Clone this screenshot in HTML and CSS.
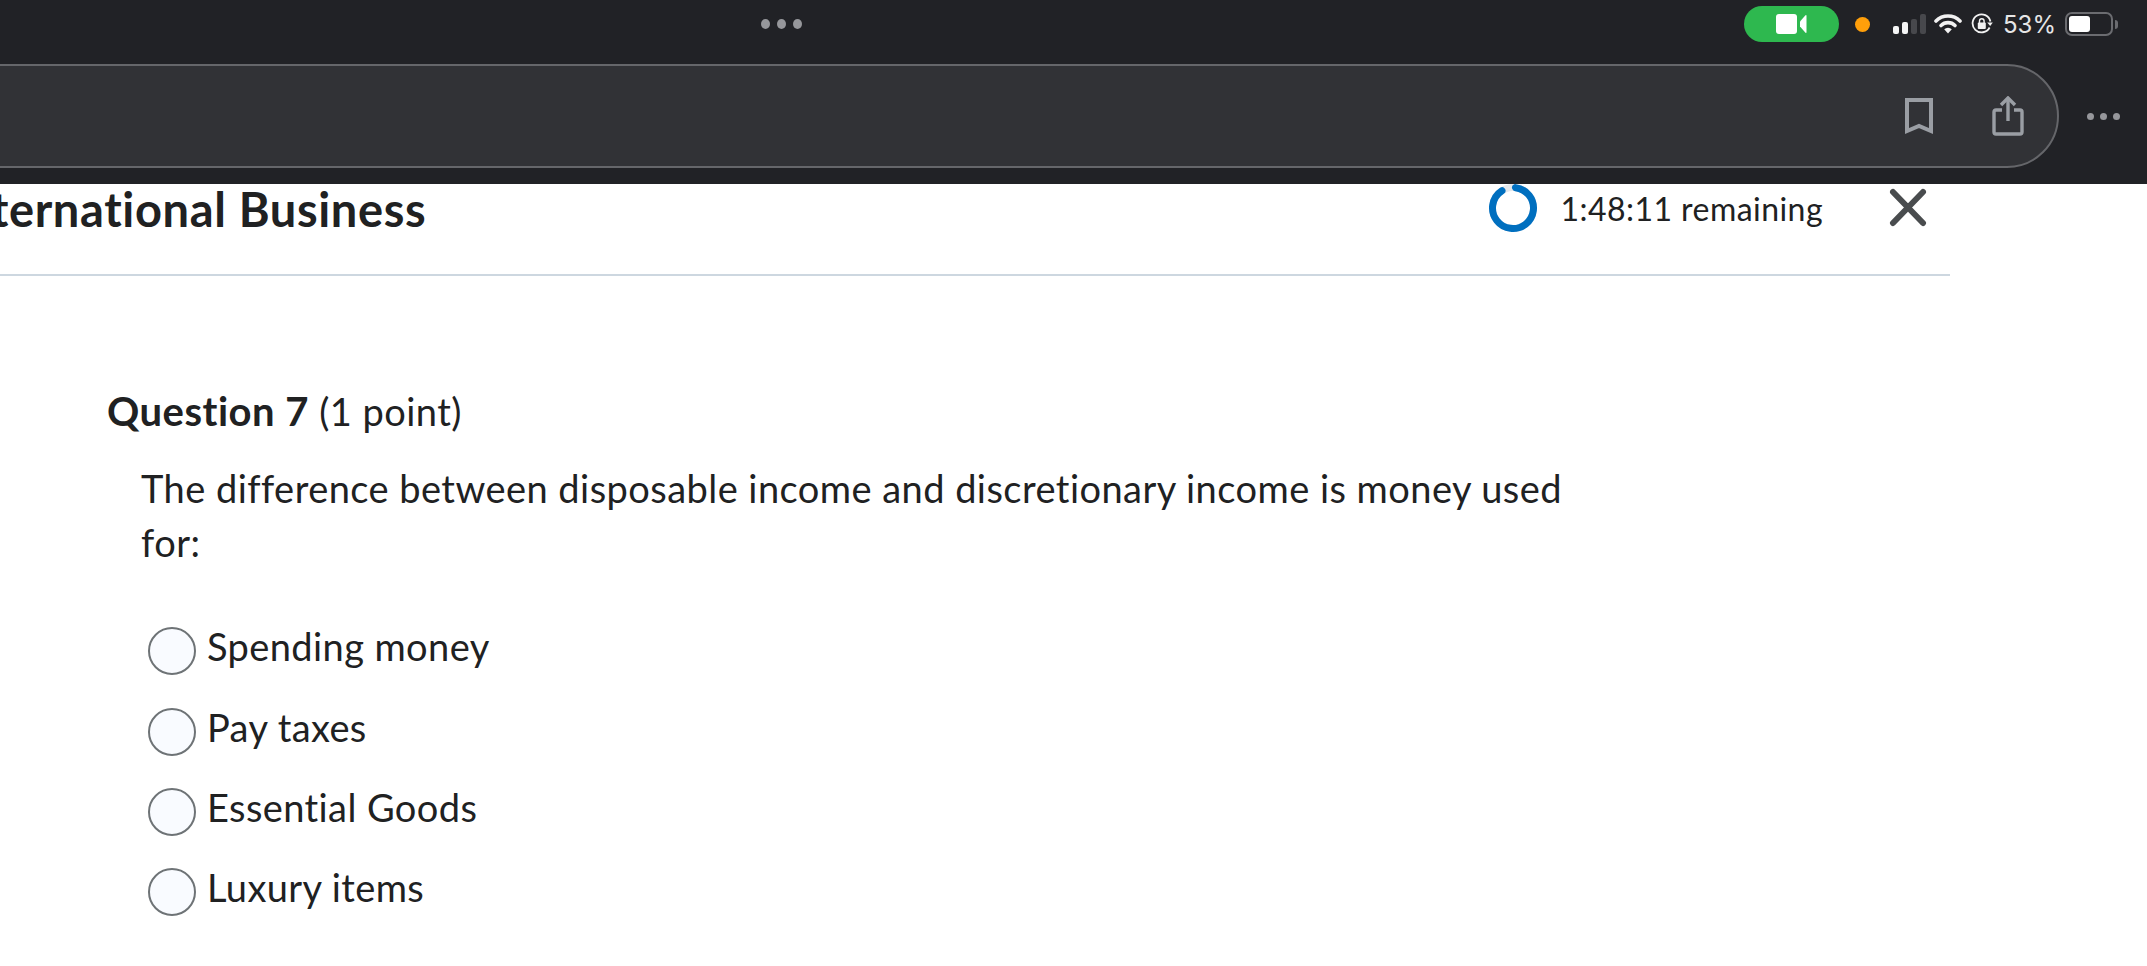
FILE: index.html
```html
<!DOCTYPE html>
<html>
<head>
    <title>Quiz - International Business</title>
    <link rel="stylesheet" href="styles.css">
</head>
<body>
    <div class="browser-bar">
        <div class="status-row">
            <div class="tab-dots"><span></span><span></span><span></span></div>
            <div class="status-icons">
                <div class="call-pill">
                    <svg width="32" height="20" viewBox="0 0 32 20">
                        <rect x="0" y="0" width="21" height="20" rx="3" fill="#fff"/>
                        <path d="M24 7.5 L29.5 1.2 Q30.5 0.4 30.5 2 L30.5 18 Q30.5 19.6 29.5 18.8 L24 12.5 Z" fill="#fff"/>
                    </svg>
                </div>
                <span class="mic-dot"></span>
                <div class="signal">
                    <span class="bar bar-1"></span>
                    <span class="bar bar-2"></span>
                    <span class="bar bar-3"></span>
                    <span class="bar bar-4"></span>
                </div>
                <svg class="wifi" width="28" height="20" viewBox="0 0 28 20">
                    <path d="M2 7 A17 17 0 0 1 26 7" fill="none" stroke="#f2f2f2" stroke-width="3.6" stroke-linecap="round"/>
                    <path d="M7 11.5 A10 10 0 0 1 21 11.5" fill="none" stroke="#f2f2f2" stroke-width="3.6" stroke-linecap="round"/>
                    <path d="M10.2 15.2 A5.5 5.5 0 0 1 17.8 15.2 L14 19.5 Z" fill="#f2f2f2"/>
                </svg>
                <svg class="rotate-lock" width="22" height="22" viewBox="0 0 22 22">
                    <path d="M18.6 14.5 A9 9 0 1 1 19.4 8.5" fill="none" stroke="#f2f2f2" stroke-width="1.8"/>
                    <path d="M16.2 9.6 L21.8 9.6 L19.2 13 Z" fill="#f2f2f2"/>
                    <rect x="6.8" y="9.5" width="8" height="6.5" rx="1" fill="#f2f2f2"/>
                    <path d="M8.5 10 V8 A2.3 2.3 0 0 1 13.1 8 V10" fill="none" stroke="#f2f2f2" stroke-width="1.4"/>
                </svg>
                <span class="battery-pct">53%</span>
                <div class="battery"><span class="battery-level"></span></div>
                <span class="battery-tip"></span>
            </div>
        </div>
        <div class="address-row">
            <div class="address-pill">
                <svg width="28" height="37" viewBox="0 0 28 37">
                    <path d="M2 2 H26 V33 L14 28 L2 33 Z" fill="none" stroke="#9a9ea4" stroke-width="4"/>
                </svg>
                <svg width="32" height="40" viewBox="0 0 32 40">
                    <path d="M10 14 H4 Q2 14 2 16 V36 Q2 38 4 38 H28 Q30 38 30 36 V16 Q30 14 28 14 H22" fill="none" stroke="#9a9ea4" stroke-width="3.4"/>
                    <path d="M16 3 V25" fill="none" stroke="#9a9ea4" stroke-width="3.4"/>
                    <path d="M9 9 L16 2 L23 9" fill="none" stroke="#9a9ea4" stroke-width="3.4"/>
                </svg>
            </div>
            <div class="more-dots"><span></span><span></span><span></span></div>
        </div>
    </div>

    <div class="quiz-header">
        <h1 class="course-name">ternational Business</h1>
        <div class="timer">
            <svg width="50" height="50" viewBox="0 0 50 50">
                <circle cx="25" cy="25" r="20.5" fill="none" stroke="#e4e8ec" stroke-width="7"/>
                <circle class="timer-arc" cx="25" cy="25" r="20.5" pathLength="100" fill="none" stroke="#006fbf" stroke-width="7" stroke-linecap="round" stroke-dasharray="89 11"/>
            </svg>
            <span class="timer-text">1:48:11 remaining</span>
        </div>
        <svg class="close-icon" width="40" height="40" viewBox="0 0 40 40">
            <path d="M5 4 L35 35 M35 4 L5 35" fill="none" stroke="#494c4e" stroke-width="6" stroke-linecap="round"/>
        </svg>
    </div>

    <div class="question">
        <h2 class="question-title"><strong>Question 7</strong> (1 point)</h2>
        <p class="question-text">The difference between disposable income and discretionary income is money used for:</p>
        <div class="choices">
            <label class="choice"><span class="radio"></span>Spending money</label>
            <label class="choice"><span class="radio"></span>Pay taxes</label>
            <label class="choice"><span class="radio"></span>Essential Goods</label>
            <label class="choice"><span class="radio"></span>Luxury items</label>
        </div>
    </div>
</body>
</html>
```

FILE: styles.css
```css
html, body {
    height: 100%;
}
body {
    margin: 0;
    background-color: #fff;
    color: #202122;
    font-family: Lato, "Open Sans", sans-serif;
    font-variant-ligatures: none;
    overflow: hidden;
}

/* browser chrome */
.browser-bar {
    height: 184px;
    background-color: #212226;
}
.status-row {
    height: 48px;
    padding: 0 29px 0 761px;
    display: flex;
    align-items: center;
    justify-content: space-between;
}
.tab-dots {
    display: flex;
    gap: 7px;
}
.tab-dots span {
    width: 9px;
    height: 10px;
    border-radius: 50%;
    background-color: #96979b;
}
.status-icons {
    display: flex;
    align-items: center;
}
.call-pill {
    width: 95px;
    height: 36px;
    border-radius: 18px;
    background-color: #2eb84f;
    display: flex;
    align-items: center;
    justify-content: center;
    margin-right: 16px;
}
.mic-dot {
    width: 15px;
    height: 15px;
    border-radius: 50%;
    background-color: #ff9f0a;
    margin-right: 23px;
}
.signal {
    display: flex;
    align-items: flex-end;
    gap: 3px;
    height: 20px;
    margin-right: 8px;
}
.bar {
    width: 6px;
    border-radius: 2px;
}
.bar-1 {
    height: 8px;
    background-color: #f5f5f5;
}
.bar-2 {
    height: 12px;
    background-color: #f5f5f5;
}
.bar-3 {
    height: 15px;
    background-color: #47484c;
}
.bar-4 {
    height: 20px;
    background-color: #47484c;
}
.wifi {
    margin-right: 9px;
}
.rotate-lock {
    margin-right: 10px;
}
.battery-pct {
    font-family: Inter, sans-serif;
    font-size: 24px;
    color: #e6e6e6;
    margin-right: 9px;
}
.battery {
    box-sizing: border-box;
    width: 48px;
    height: 24px;
    border: 2px solid #6b6c70;
    border-radius: 7px;
    padding: 2px;
    display: flex;
}
.battery-level {
    width: 21px;
    background-color: #fff;
    border-radius: 3px;
}
.battery-tip {
    width: 3px;
    height: 9px;
    margin-left: 2px;
    background-color: #6b6c70;
    border-radius: 0 3px 3px 0;
}
.address-row {
    display: flex;
    align-items: center;
    margin-top: 16px;
}
.address-pill {
    box-sizing: border-box;
    width: 2099px;
    height: 104px;
    margin-left: -40px;
    background-color: #313236;
    border: 2px solid #65666a;
    border-radius: 0 52px 52px 0;
    display: flex;
    align-items: center;
    justify-content: flex-end;
    gap: 59px;
    padding-right: 33px;
}
.more-dots {
    display: flex;
    gap: 6px;
    margin-left: 28px;
}
.more-dots span {
    width: 7px;
    height: 7px;
    border-radius: 50%;
    background-color: #96979b;
}

/* quiz header */
.quiz-header {
    width: 1950px;
    height: 90px;
    border-bottom: 2px solid #cdd7e0;
    display: flex;
    align-items: flex-start;
}
.course-name {
    margin: 0 0 0 -9px;
    font-size: 47px;
    font-weight: 700;
    line-height: 50px;
    letter-spacing: 0.65px;
    flex: 1;
}
.timer {
    display: flex;
    align-items: center;
    gap: 23px;
    margin-top: -1px;
}
.timer-arc {
    transform: rotate(-83deg);
    transform-origin: 25px 25px;
}
.timer-text {
    font-size: 32px;
    letter-spacing: 0.45px;
}
.close-icon {
    margin: 4px 22px 0 65px;
}

/* question */
.question {
    padding: 110px 0 0 107px;
}
.question-title {
    margin: 0;
    font-size: 38px;
    font-weight: 400;
    line-height: 50px;
    letter-spacing: 0.45px;
}
.question-title strong {
    font-size: 40px;
    letter-spacing: 0.5px;
}
.question-text {
    width: 1440px;
    margin: 25px 0 0 34px;
    font-size: 38px;
    line-height: 54px;
    letter-spacing: 0.45px;
}
.choices {
    margin: 37px 0 0 41px;
    display: flex;
    flex-direction: column;
}
.choice {
    height: 80.4px;
    display: flex;
    align-items: center;
    font-size: 38px;
    letter-spacing: 0.4px;
}
.radio {
    box-sizing: border-box;
    width: 48px;
    height: 48px;
    border: 2px solid #6e7376;
    border-radius: 50%;
    background-color: #f9fbff;
    margin: 10px 11px 0 0;
}
```
